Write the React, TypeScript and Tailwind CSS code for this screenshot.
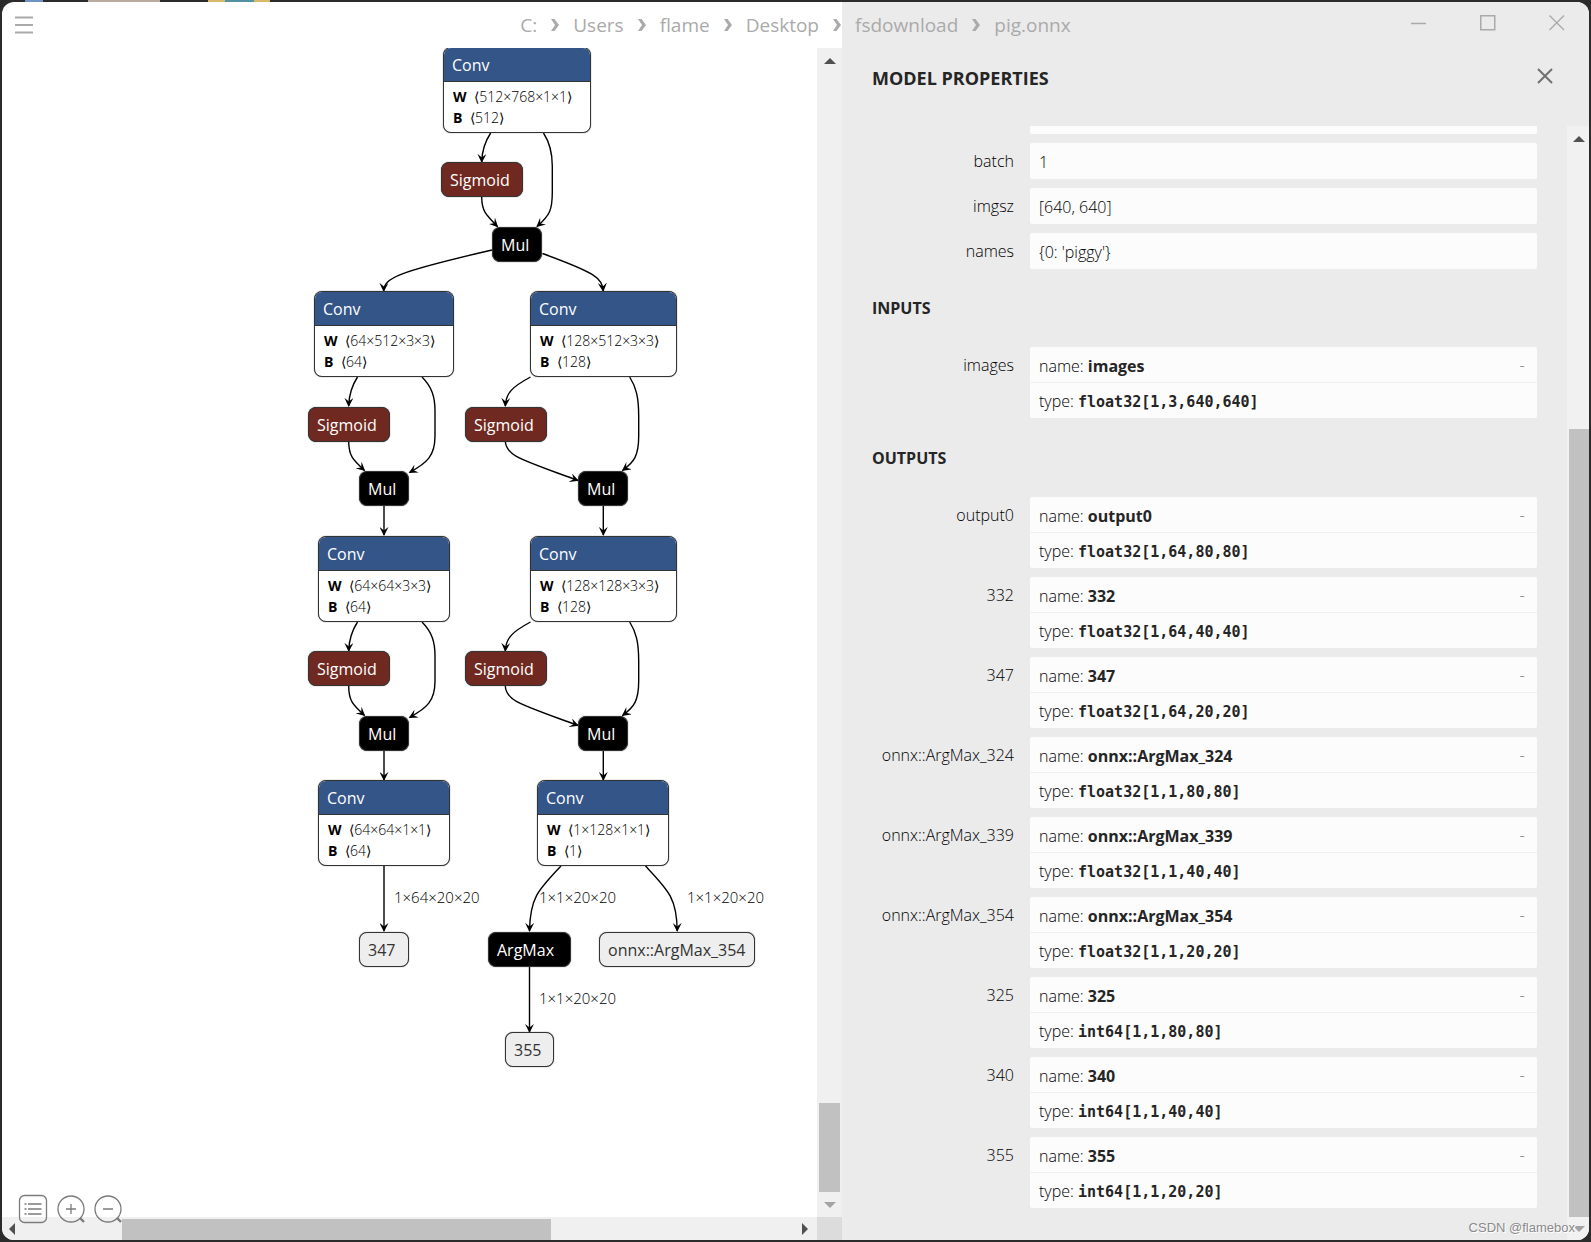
import React from 'react'

type NodeKind = 'conv' | 'sigmoid' | 'op' | 'value'

interface GraphNode {
  id: string;
  kind: NodeKind;
  label: string;
  x: number;
  y: number;
  w: number;
  weights?: string;
  bias?: string;
}

interface Argument {
  label: string;
  type: string;
}

const NODES: GraphNode[] = [
  { id: 'conv-0', kind: 'conv', label: 'Conv', x: 441, y: -1, w: 148, weights: '512×768×1×1', bias: '512' },
  { id: 'sigmoid-0', kind: 'sigmoid', label: 'Sigmoid', x: 439, y: 114, w: 82 },
  { id: 'mul-0', kind: 'op', label: 'Mul', x: 490, y: 179, w: 50 },

  { id: 'conv-1', kind: 'conv', label: 'Conv', x: 312, y: 243, w: 140, weights: '64×512×3×3', bias: '64' },
  { id: 'conv-2', kind: 'conv', label: 'Conv', x: 528, y: 243, w: 147, weights: '128×512×3×3', bias: '128' },
  { id: 'sigmoid-1', kind: 'sigmoid', label: 'Sigmoid', x: 306, y: 359, w: 82 },
  { id: 'sigmoid-2', kind: 'sigmoid', label: 'Sigmoid', x: 463, y: 359, w: 82 },
  { id: 'mul-1', kind: 'op', label: 'Mul', x: 357, y: 423, w: 50 },
  { id: 'mul-2', kind: 'op', label: 'Mul', x: 576, y: 423, w: 50 },

  { id: 'conv-3', kind: 'conv', label: 'Conv', x: 316, y: 488, w: 132, weights: '64×64×3×3', bias: '64' },
  { id: 'conv-4', kind: 'conv', label: 'Conv', x: 528, y: 488, w: 147, weights: '128×128×3×3', bias: '128' },
  { id: 'sigmoid-3', kind: 'sigmoid', label: 'Sigmoid', x: 306, y: 603, w: 82 },
  { id: 'sigmoid-4', kind: 'sigmoid', label: 'Sigmoid', x: 463, y: 603, w: 82 },
  { id: 'mul-3', kind: 'op', label: 'Mul', x: 357, y: 668, w: 50 },
  { id: 'mul-4', kind: 'op', label: 'Mul', x: 576, y: 668, w: 50 },

  { id: 'conv-5', kind: 'conv', label: 'Conv', x: 316, y: 732, w: 132, weights: '64×64×1×1', bias: '64' },
  { id: 'conv-6', kind: 'conv', label: 'Conv', x: 535, y: 732, w: 132, weights: '1×128×1×1', bias: '1' },
  { id: 'out-347', kind: 'value', label: '347', x: 357, y: 884, w: 50 },
  { id: 'argmax', kind: 'op', label: 'ArgMax', x: 486, y: 884, w: 83 },
  { id: 'out-354', kind: 'value', label: 'onnx::ArgMax_354', x: 597, y: 884, w: 156 },
  { id: 'out-355', kind: 'value', label: '355', x: 503, y: 984, w: 49 },
]

// edges of one Conv / Sigmoid / Mul row, drawn once for each of the two rows
const BRANCH_EDGES = [
  'M355.5 329C349 339 347 347 346.7 358',
  'M420 329C430 339 433 349 433 363L433 388C433 408 425 415 407.5 424.5',
  'M346.7 393C346.7 408 351 412 362.5 422.5',
  'M528.5 329C510 339 504 345 503.3 358',
  'M627.7 329C634 339 636.7 349 636.7 368L636.7 388C636.7 408 632 414 620.5 422.5',
  'M503.3 393C504 408 518 411 576 432.5',
  'M382 457L382 487',
  'M601.3 457L601.3 487',
]

const EDGES = [
  'M488.7 85C482 95 480 103 479.7 114',
  'M541.5 85C548 95 550.3 105 550.3 118L550.3 144C550.3 162 548 167 535 178.5',
  'M479.7 149C479.7 163 484 167 495.5 178.5',
  'M490 202C395 224 382 230 381.7 243',
  'M540.5 205.5C594 225 600 230 601.2 243',
  'M382 818L382 883',
  'M559 818C536 842 528 850 527.5 883',
  'M643.5 818C666 842 675 850 675.2 883',
  'M527.5 918L527.5 984',
]

const EDGE_LABELS = [
  { text: '1×64×20×20', x: 392, y: 839 },
  { text: '1×1×20×20', x: 537, y: 839 },
  { text: '1×1×20×20', x: 685, y: 839 },
  { text: '1×1×20×20', x: 537, y: 940 },
]

const PATH = ['C:', 'Users', 'flame', 'Desktop', 'fsdownload', 'pig.onnx']

const METADATA = [
  { label: 'batch', value: '1' },
  { label: 'imgsz', value: '[640, 640]' },
  { label: 'names', value: "{0: 'piggy'}" },
]

const INPUTS: Argument[] = [
  { label: 'images', type: 'float32[1,3,640,640]' },
]

const OUTPUTS: Argument[] = [
  { label: 'output0', type: 'float32[1,64,80,80]' },
  { label: '332', type: 'float32[1,64,40,40]' },
  { label: '347', type: 'float32[1,64,20,20]' },
  { label: 'onnx::ArgMax_324', type: 'float32[1,1,80,80]' },
  { label: 'onnx::ArgMax_339', type: 'float32[1,1,40,40]' },
  { label: 'onnx::ArgMax_354', type: 'float32[1,1,20,20]' },
  { label: '325', type: 'int64[1,1,80,80]' },
  { label: '340', type: 'int64[1,1,40,40]' },
  { label: '355', type: 'int64[1,1,20,20]' },
]

const KIND_CLASSES: Record<NodeKind, string> = {
  conv: 'bg-white text-white',
  sigmoid: 'bg-[#702921] text-white',
  op: 'bg-black text-white',
  value: 'bg-[#eeeeee] text-[#333333]',
}

const Arrow: React.FC<{ dir: 'up' | 'down' | 'left' | 'right'; muted?: boolean }> = ({ dir, muted }) => {
  const points = {
    up: '6,3 12,9 0,9',
    down: '0,3 12,3 6,9',
    left: '3,6 9,0 9,12',
    right: '3,0 9,6 3,12',
  }
  return (
    <svg className={muted ? 'size-3 text-[#a3a3a3]' : 'size-3 text-[#505050]'} viewBox="0 0 12 12" aria-hidden="true">
      <polygon points={points[dir]} fill="currentColor" />
    </svg>
  )
}

const Node: React.FC<{ node: GraphNode }> = ({ node }) => (
  <div
    className={`absolute overflow-hidden rounded-lg border border-[#333333] shadow-[0_0_1px_#333333] ${KIND_CLASSES[node.kind]}`}
    style={{ left: node.x, top: node.y, width: node.w }}
  >
    <div className={node.kind === 'conv' ? 'h-[34px] border-b border-[#333333] bg-[#335588] pl-2 text-base leading-[34px]' : 'h-[33px] pl-2 text-base leading-[34px] whitespace-nowrap'}>
      {node.label}
    </div>
    {node.weights && (
      <div className="pt-1 pb-1 pl-[9px] text-sm leading-[21px] font-light whitespace-nowrap text-black">
        <div><b className="mr-1 font-bold">W</b> ⟨{node.weights}⟩</div>
        <div><b className="mr-1 font-bold">B</b> ⟨{node.bias}⟩</div>
      </div>
    )}
  </div>
)

const Graph = () => (
  <div className="relative min-w-0 flex-1 overflow-hidden bg-white">
    <svg className="absolute top-0 left-0" width="800" height="1100" fill="none" stroke="#000" strokeWidth="1.4">
      <defs>
        <marker id="vee" viewBox="0 0 10 10" refX="9" refY="5" markerWidth="9" markerHeight="9" markerUnits="userSpaceOnUse" orient="auto">
          <path d="M0 0L10 5L0 10L4 5Z" fill="#000" stroke="none" />
        </marker>
      </defs>
      {EDGES.map((d) => <path key={d} d={d} markerEnd="url(#vee)" />)}
      {BRANCH_EDGES.map((d) => <path key={d} d={d} markerEnd="url(#vee)" />)}
      <g transform="translate(0 245)">
        {BRANCH_EDGES.map((d) => <path key={d} d={d} markerEnd="url(#vee)" />)}
      </g>
    </svg>
    {NODES.map((node) => <Node key={node.id} node={node} />)}
    {EDGE_LABELS.map((label) => (
      <span
        key={`${label.x}-${label.y}`}
        className="absolute text-[15px] leading-5 font-light text-black"
        style={{ left: label.x, top: label.y }}
      >
        {label.text}
      </span>
    ))}
  </div>
)

const Toolbar = () => (
  <div className="absolute bottom-4 left-4 flex items-center gap-2 text-[#7b7b7b]">
    <button type="button" aria-label="Model properties">
      <svg className="size-[30px]" viewBox="0 0 30 30" fill="none" stroke="currentColor" strokeWidth="1.3">
        <rect x="1.5" y="1.5" width="27" height="27" rx="5" />
        <path d="M6.5 10h2M6.5 15h2M6.5 20h2M10 10h13.5M10 15h13.5M10 20h13.5" />
      </svg>
    </button>
    <button type="button" aria-label="Zoom in">
      <svg className="size-[30px]" viewBox="0 0 30 30" fill="none" stroke="currentColor" strokeWidth="1.3">
        <circle cx="15" cy="15" r="13" />
        <path d="M10 15h10M15 10v10" />
        <path d="M24 24l4 4" strokeWidth="2.4" />
      </svg>
    </button>
    <button type="button" aria-label="Zoom out">
      <svg className="size-[30px]" viewBox="0 0 30 30" fill="none" stroke="currentColor" strokeWidth="1.3">
        <circle cx="14" cy="15" r="13" />
        <path d="M9 15h10" />
        <path d="M23 24l4 4" strokeWidth="2.4" />
      </svg>
    </button>
  </div>
)

const TitleBar = () => (
  <header className="absolute inset-x-0 top-0 z-10 grid h-[46px] grid-cols-[1fr_auto_1fr] items-center text-[#aaaaaa]">
    <button type="button" aria-label="Menu" className="ml-3 w-5">
      <svg className="size-5" viewBox="0 0 20 20" stroke="currentColor" strokeWidth="1.8">
        <path d="M1 2.5h18M1 10h18M1 17.5h18" />
      </svg>
    </button>
    <nav className="flex items-center gap-[13px] text-[19px]">
      {PATH.map((part, partIdx) => (
        <React.Fragment key={part}>
          {partIdx > 0 && (
            <svg className="h-3.5 w-2.5" viewBox="0 0 10 14" fill="currentColor" aria-hidden="true">
              <path d="M1 1H4.5L9 7L4.5 13H1L5 7Z" />
            </svg>
          )}
          <button type="button">{part}</button>
        </React.Fragment>
      ))}
    </nav>
    <div className="mb-1 flex justify-end gap-[53px] pr-6">
      <button type="button" aria-label="Minimize">
        <svg className="size-4" viewBox="0 0 16 16" stroke="currentColor" strokeWidth="1.5"><path d="M0 8.5h15" /></svg>
      </button>
      <button type="button" aria-label="Maximize">
        <svg className="size-4" viewBox="0 0 16 16" fill="none" stroke="currentColor" strokeWidth="1.5"><rect x=".75" y=".75" width="14" height="14" /></svg>
      </button>
      <button type="button" aria-label="Close window">
        <svg className="size-4" viewBox="0 0 16 16" stroke="currentColor" strokeWidth="1.4"><path d="M.5 .5l14.5 14.5M15 .5l-14.5 14.5" /></svg>
      </button>
    </div>
  </header>
)

const Section: React.FC<{ title: string; items: Argument[] }> = ({ title, items }) => (
  <section className="pt-7 pb-px">
    <h2 className="mb-7 leading-[22px] font-bold text-[#252525] uppercase">{title}</h2>
    <dl className="flex flex-col gap-[9px]">
      {items.map((item) => (
        <div key={item.label} className="flex gap-4">
          <dt className="w-[142px] shrink-0 text-right leading-9">{item.label}</dt>
          <dd className="flex-1 divide-y divide-[#f0f0f0] rounded-xs bg-[#fcfcfc]">
            <div className="flex h-9 justify-between px-[9px] leading-[38px]">
              <span>name: <b className="font-bold text-[#252525]">{item.label}</b></span>
              <button type="button" aria-label={`Collapse ${item.label}`} className="w-3 leading-8 text-[#777777]">-</button>
            </div>
            <div className="h-[35px] px-[9px] leading-9">
              type: <code className="font-['DejaVu_Sans_Mono',monospace] text-[15px] font-bold text-[#252525]">{item.type}</code>
            </div>
          </dd>
        </div>
      ))}
    </dl>
  </section>
)

const Sidebar = () => (
  <aside className="flex w-[747px] max-w-[60%] shrink-0 flex-col bg-[#ebebeb] text-base font-light text-black">
    <div className="flex h-[124px] shrink-0 items-start justify-between pt-16 pr-9 pl-[30px] text-[#252525]">
      <h1 className="text-lg leading-6 font-bold uppercase">Model properties</h1>
      <button type="button" aria-label="Close" className="mt-0.5 text-[#707070]">
        <svg className="size-4" viewBox="0 0 16 16" stroke="currentColor" strokeWidth="2"><path d="M1 1l14 14M15 1l-14 14" /></svg>
      </button>
    </div>
    <div className="flex min-h-0 flex-1">
      <div className="min-w-0 flex-1 overflow-hidden pr-[30px] pl-[30px]">
        <dl className="flex flex-col gap-[9px]">
          <div className="ml-[158px] h-2 rounded-b-xs bg-[#fcfcfc]" />
          {METADATA.map((item) => (
            <div key={item.label} className="flex gap-4">
              <dt className="w-[142px] shrink-0 text-right leading-9">{item.label}</dt>
              <dd className="h-9 flex-1 rounded-xs bg-[#fcfcfc] px-[9px] leading-[38px]">{item.value}</dd>
            </div>
          ))}
        </dl>
        <Section title="Inputs" items={INPUTS} />
        <Section title="Outputs" items={OUTPUTS} />
      </div>
      <div className="flex w-[22px] flex-col items-center bg-[#f1f1f1]">
        <div className="flex h-[26px] items-center pl-0.5"><Arrow dir="up" /></div>
        <div className="grow-[277]" />
        <div className="ml-0.5 w-5 grow-[788] bg-[#c1c1c1]" />
        <div className="flex h-[23px] items-center pl-0.5"><Arrow dir="down" muted /></div>
      </div>
    </div>
  </aside>
)

// slivers of the desktop icons that show above the window's top edge
const DesktopEdge = () => (
  <div className="flex h-0.5 shrink-0 pl-[25px]" aria-hidden="true">
    <span className="w-[18px] bg-[#6f93c4]" />
    <span className="ml-[45px] w-[72px] bg-[#b9aba0]" />
    <span className="ml-12 w-[17px] bg-[#d8b867]" />
    <span className="w-[29px] bg-[#4f93a5]" />
    <span className="w-4 bg-[#d8b867]" />
  </div>
)

export default function App() {
  return (
    <div className="flex h-screen flex-col bg-[#2b2b2b] font-['Open_Sans','Noto_Sans',sans-serif]">
      <DesktopEdge />
      <div className="relative mx-0.5 mb-0.5 flex min-h-0 flex-1 overflow-hidden rounded-xl bg-white">
        <TitleBar />
        <main className="relative flex min-w-0 flex-1 flex-col pt-[46px]">
          <div className="flex min-h-0 flex-1">
            <Graph />
            <div className="flex w-[25px] flex-col items-center bg-[#f0f0f0]">
              <div className="flex h-[26px] items-center"><Arrow dir="up" /></div>
              <div className="grow-[1029]" />
              <div className="w-[21px] grow-[89] bg-[#c1c1c1]" />
              <div className="flex h-[25px] items-center"><Arrow dir="down" muted /></div>
            </div>
          </div>
          <div className="flex h-[23px] items-center bg-[#f0f0f0]">
            <div className="flex w-5 justify-center"><Arrow dir="left" /></div>
            <div className="grow-[100]" />
            <div className="mt-0.5 h-[21px] grow-[429] bg-[#c1c1c1]" />
            <div className="grow-[242]" />
            <div className="flex w-6 justify-center"><Arrow dir="right" /></div>
            <div className="h-full w-[25px] bg-[#dcdcdc]" />
          </div>
          <Toolbar />
        </main>
        <Sidebar />
        <span className="absolute right-3.5 bottom-1 font-['Liberation_Sans',sans-serif] text-[13px] leading-4 text-[#8a8a8a] [text-shadow:1px_1px_0_white]">
          CSDN @flamebox
        </span>
      </div>
    </div>
  )
}
